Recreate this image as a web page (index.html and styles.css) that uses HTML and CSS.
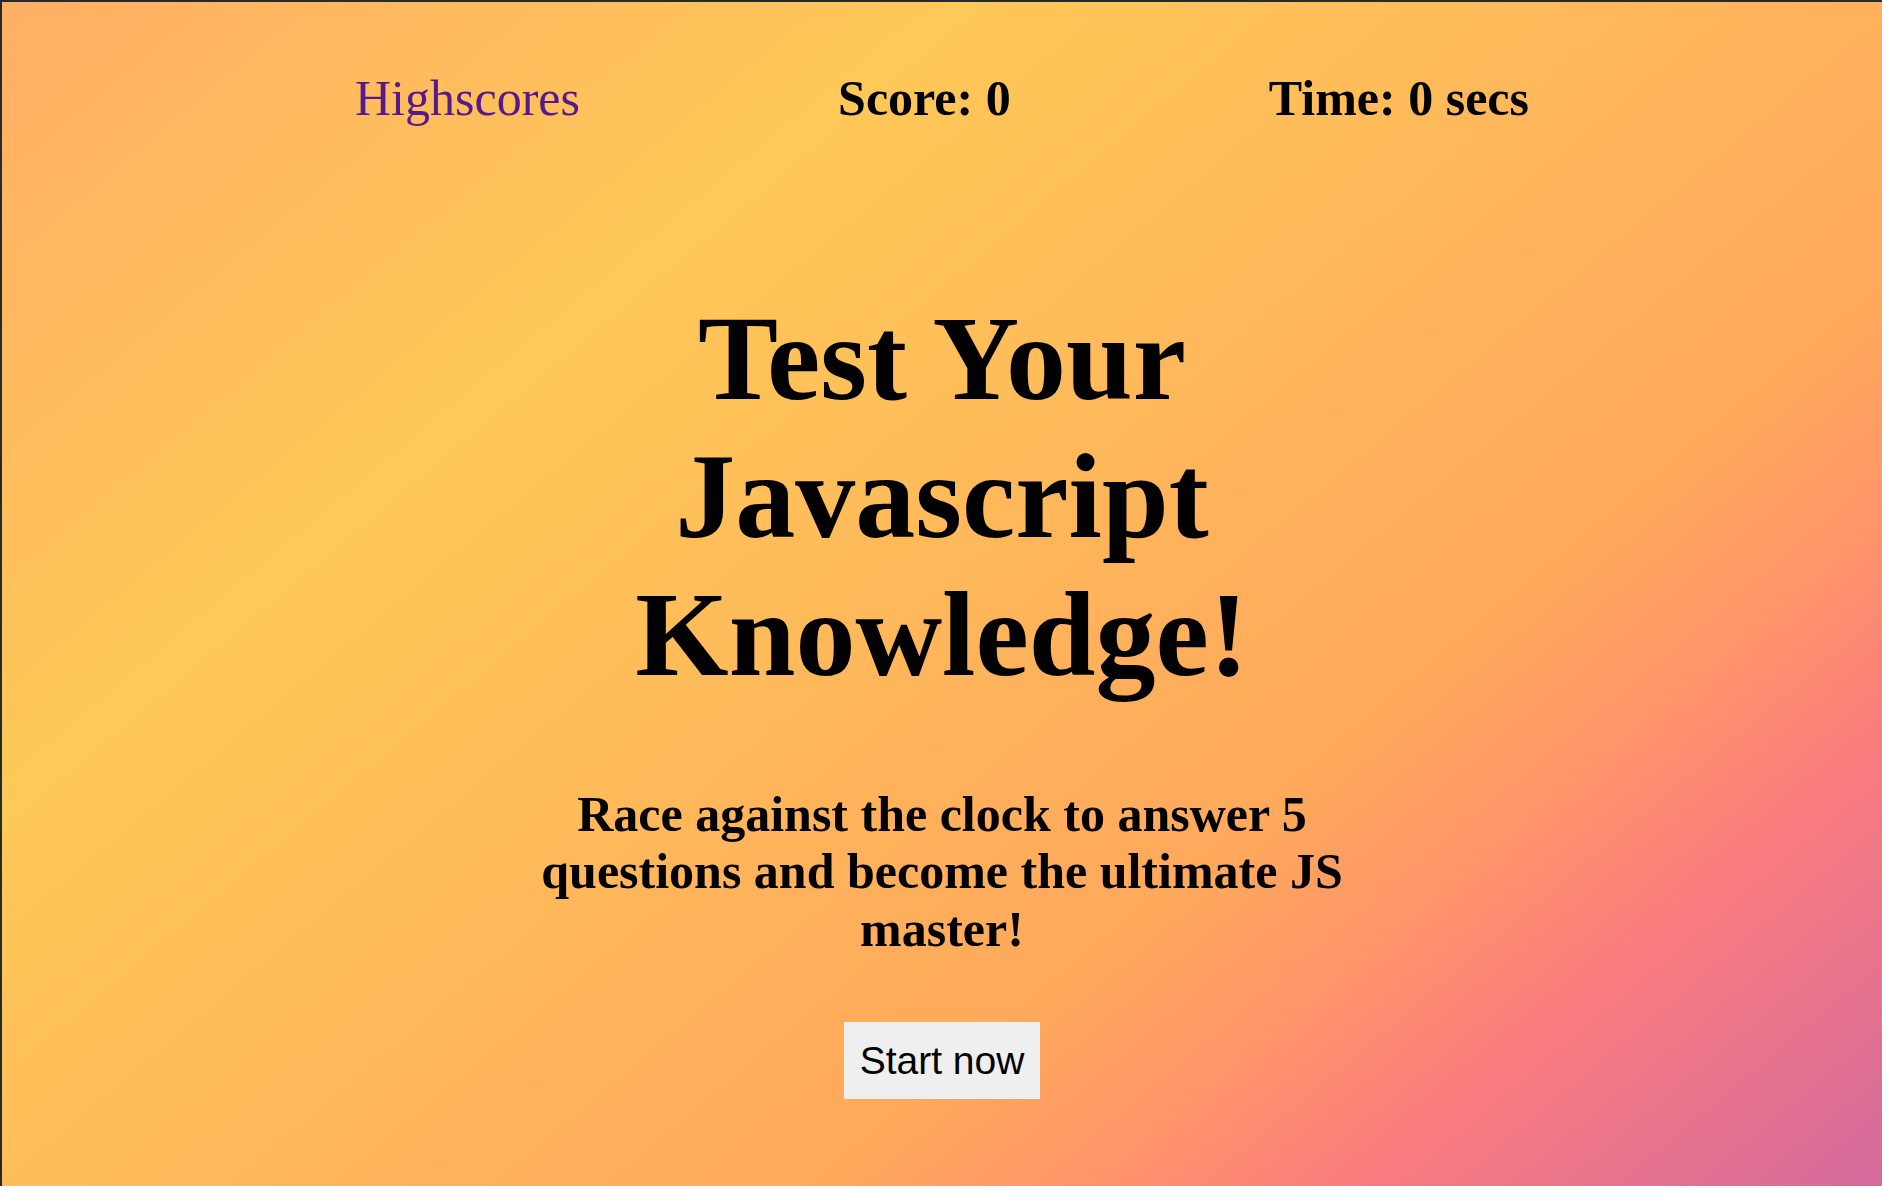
FILE: index.html
```html
<!DOCTYPE html>
<html lang="en">
<head>
<meta charset="utf-8">
<title>Javascript Quiz</title>
<link rel="stylesheet" href="styles.css">
</head>
<body>
<div class="page">
  <header class="topbar">
    <a class="highscores" href="#">Highscores</a>
    <div class="stat">Score: 0</div>
    <div class="stat">Time: 0 secs</div>
  </header>
  <main class="intro">
    <h1 class="title">Test Your Javascript Knowledge!</h1>
    <p class="lead">Race against the clock to answer 5 questions and become the ultimate JS master!</p>
    <button class="start" type="button">Start now</button>
  </main>
</div>
</body>
</html>
```
FILE: styles.css
```css
html, body {
  margin: 0;
  padding: 0;
  height: 100%;
}
body {
  background: #262a2b;
  font-family: "Liberation Serif", "Times New Roman", serif;
  color: #000;
}
.page {
  box-sizing: border-box;
  min-height: 100vh;
  border-top: 2px solid #262a2b;
  border-left: 2px solid #262a2b;
  background: linear-gradient(140deg, #ffae65 0%, #ffc857 29%, #ffbc5a 45%, #ffae5b 60%, #ffa95c 68%, #ff946a 76%, #f97c7e 84%, #d46a9d 100%);
  overflow: hidden;
}
.topbar {
  width: 1174px;
  margin: 0 auto;
  padding-top: 68px;
  display: flex;
  justify-content: space-between;
  align-items: baseline;
  font-size: 50px;
  line-height: 57.5px;
}
.highscores {
  color: #551a8b;
  text-decoration: none;
}
.stat {
  font-weight: bold;
}
.intro {
  width: 850px;
  margin: 0 auto;
  display: flex;
  flex-direction: column;
  align-items: center;
  text-align: center;
}
.title {
  margin: 162px 0 0;
  font-size: 120px;
  line-height: 138px;
  font-weight: bold;
}
.lead {
  margin: 82px 0 0;
  font-size: 50px;
  line-height: 57.5px;
  font-weight: bold;
}
.start {
  margin-top: 64px;
  padding: 16px 16px;
  border: none;
  border-radius: 0;
  background: #efefef;
  color: #000;
  font-family: "Liberation Sans", Arial, sans-serif;
  font-size: 39px;
  line-height: 45px;
  cursor: pointer;
}
```
